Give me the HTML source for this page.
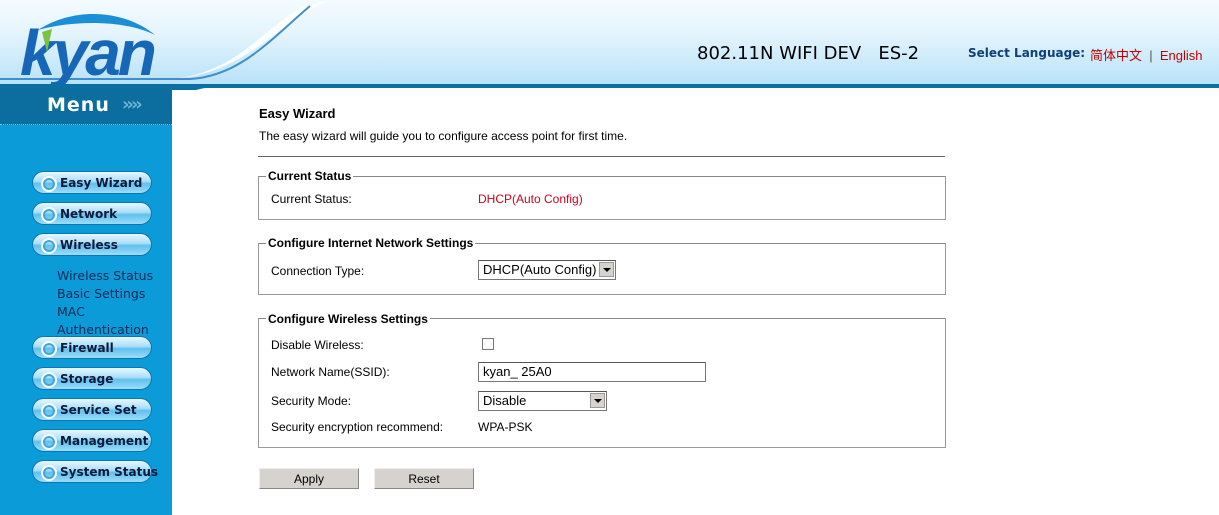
<!DOCTYPE html>
<html><head><style>
*{margin:0;padding:0;box-sizing:border-box}
body{width:1219px;height:515px;overflow:hidden;font-family:"Liberation Sans",Arial,sans-serif;background:#fff;position:relative}
#hdr{position:absolute;left:0;top:0;width:1219px;height:85px;background:linear-gradient(#f4fbff 0%,#e4f4fd 40%,#b7e2f8 100%)}
#bar{position:absolute;left:0;top:84px;width:1219px;height:6px;background:#0b6fa2}
#side{position:absolute;left:0;top:88px;width:172px;height:427px;background:#0b9bd9}
#menuband{position:absolute;left:0;top:88px;width:172px;height:37px;background:#0c6e9f;border-bottom:1px dotted #7fc4e6}
#menu{position:absolute;left:47px;top:94px;color:#fff;font:bold 19px "DejaVu Sans",sans-serif;letter-spacing:1px}
#arr{position:absolute;left:122px;top:94px;color:#6fb3d6;font:bold 18px "DejaVu Sans",sans-serif;letter-spacing:-3px}
#main{position:absolute;left:172px;top:88px;width:1047px;height:427px;background:#fff;border-top-left-radius:36px}
.btn{position:absolute;left:32px;width:120px;height:23px;border-radius:12px;background:linear-gradient(#e8f7ff 0%,#a9def8 45%,#5fc0ee 55%,#9fdcf8 100%);border:1px solid #0a78b0;font:bold 12px "DejaVu Sans",sans-serif;color:#0b1a3a;padding-left:27px;line-height:22px;white-space:nowrap}
.btn:before{content:"";position:absolute;left:8px;top:4px;width:12px;height:12px;border-radius:50%;border:2px solid #fff;box-shadow:inset 0 0 0 2px #3aa6dc}
.sub{position:absolute;left:57px;font:12.5px "DejaVu Sans",sans-serif;color:#0c2a55}
.t{position:absolute;font-size:12px;color:#000;white-space:nowrap}
fieldset{position:absolute;left:258px;width:688px;border:1px solid #999;border-top-color:#888}
.lg{position:absolute;font:bold 12px "Liberation Sans",sans-serif;background:#fff;padding:0 2px}
.sel{position:absolute;border:1px solid #777;border-top-color:#555;background:#fff;font-size:13px;padding-left:4px;line-height:17px}
.sel i{position:absolute;right:1px;top:1px;width:15px;height:15px;background:#d6d3ce;border:1px solid #999}
.sel i:after{content:"";position:absolute;left:3px;top:5px;border:4px solid transparent;border-top:4px solid #000}
.pb{position:absolute;top:468px;width:100px;height:21px;background:#d6d3ce;border:1px solid #888;border-top-color:#eee;border-left-color:#eee;font-size:12px;text-align:center;line-height:20px}
</style></head><body>
<div id="hdr">
<svg width="330" height="85" style="position:absolute;left:0;top:0">
<path d="M0 80 L150 80 C230 80 250 40 300 8 L330 0 L330 0 C280 20 250 70 180 78 Z" fill="#fff" opacity="0.9"/>
<path d="M0 79 L190 79 C240 76 270 40 310 6" stroke="#3f8fcf" stroke-width="2" fill="none"/>
<path d="M38 30 C75 6 125 10 155 35 C125 20 75 20 38 30 Z" fill="#1a8fd6"/>
<text x="20" y="75" font-family="Liberation Sans" font-style="italic" font-weight="bold" font-size="64" fill="#1667b8" letter-spacing="-3">kyan</text>
<path d="M42 32 L52 29 L47 52 Z" fill="#7cc242"/>
</svg>
<div class="t" style="left:697px;top:43px;font:18px 'DejaVu Sans',sans-serif">802.11N WIFI DEV&nbsp;&nbsp; ES-2</div>
<div class="t" style="left:968px;top:46px;font:bold 12px 'DejaVu Sans',sans-serif;color:#123e7a">Select Language:</div>
<div class="t" style="left:1090px;top:45px;font:13px 'Liberation Sans','Noto Sans CJK SC',sans-serif;color:#c00000">简体中文 <span style="color:#555">&nbsp;|&nbsp;</span> English</div>
</div>
<div id="bar"></div>
<div id="side"></div>
<div id="menuband"></div>
<div id="menu">Menu</div><div id="arr">››››</div>
<div id="main"></div>
<div class="btn" style="top:171px">Easy Wizard</div>
<div class="btn" style="top:202px">Network</div>
<div class="btn" style="top:233px">Wireless</div>
<div class="sub" style="top:268px">Wireless Status</div>
<div class="sub" style="top:286px">Basic Settings</div>
<div class="sub" style="top:304px">MAC</div>
<div class="sub" style="top:322px">Authentication</div>
<div class="btn" style="top:336px">Firewall</div>
<div class="btn" style="top:367px">Storage</div>
<div class="btn" style="top:398px">Service Set</div>
<div class="btn" style="top:429px">Management</div>
<div class="btn" style="top:460px">System Status</div>

<div class="t" style="left:259px;top:106px;font-weight:bold;font-size:13px">Easy Wizard</div>
<div class="t" style="left:259px;top:129px">The easy wizard will guide you to configure access point for first time.</div>
<div style="position:absolute;left:258px;top:156px;width:687px;height:1px;background:#666"></div>

<fieldset style="top:176px;height:44px"></fieldset><div class="lg" style="left:266px;top:169px">Current Status</div>
<div class="t" style="left:271px;top:192px">Current Status:</div>
<div class="t" style="left:478px;top:192px;color:#d0021b">DHCP(Auto Config)</div>

<fieldset style="top:243px;height:52px"></fieldset><div class="lg" style="left:266px;top:236px">Configure Internet Network Settings</div>
<div class="t" style="left:271px;top:264px">Connection Type:</div>
<div class="sel" style="left:478px;top:260px;width:138px;height:20px">DHCP(Auto Config)<i></i></div>

<fieldset style="top:318px;height:130px"></fieldset><div class="lg" style="left:266px;top:312px">Configure Wireless Settings</div>
<div class="t" style="left:271px;top:338px">Disable Wireless:</div>
<div style="position:absolute;left:482px;top:338px;width:12px;height:12px;border:1px solid #777;background:#fff"></div>
<div class="t" style="left:271px;top:365px">Network Name(SSID):</div>
<div class="sel" style="left:478px;top:362px;width:228px;height:20px;font-size:13px">kyan_ 25A0</div>
<div class="t" style="left:271px;top:394px">Security Mode:</div>
<div class="sel" style="left:478px;top:391px;width:129px;height:20px">Disable<i></i></div>
<div class="t" style="left:271px;top:420px">Security encryption recommend:</div>
<div class="t" style="left:478px;top:420px">WPA-PSK</div>

<div class="pb" style="left:259px">Apply</div>
<div class="pb" style="left:374px">Reset</div>
</body></html>
